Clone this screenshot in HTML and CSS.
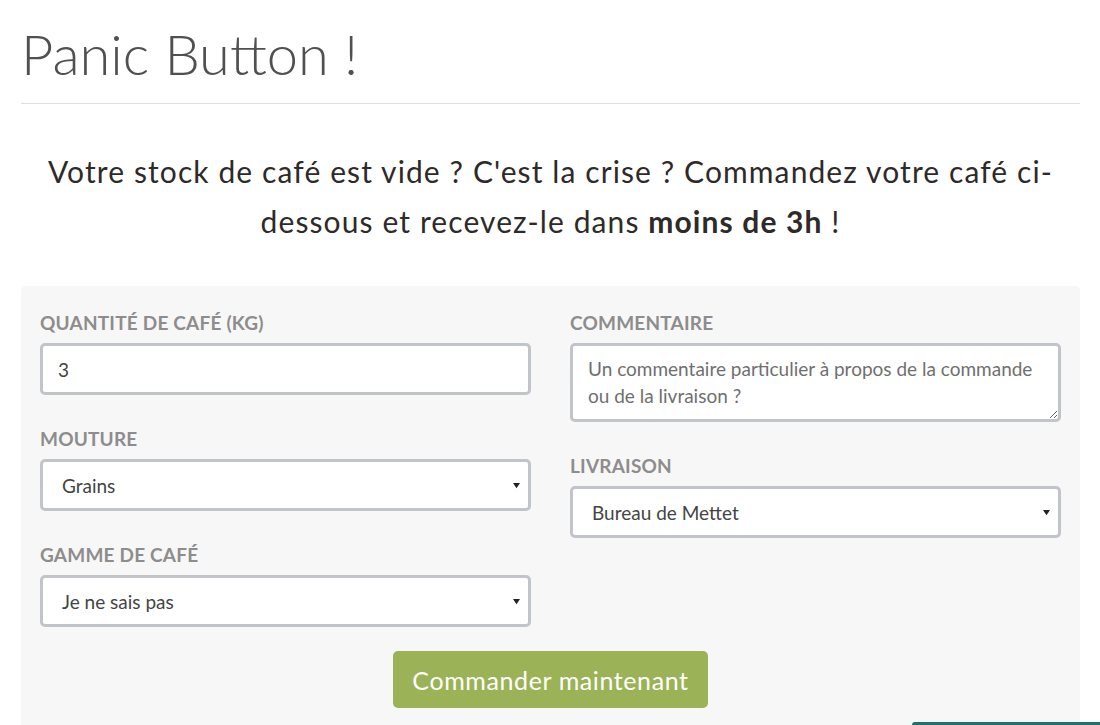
FILE: index.html
```html
<!DOCTYPE html>
<html lang="fr">
<head>
<meta charset="utf-8">
<title>Panic Button !</title>
<link rel="stylesheet" href="styles.css">
</head>
<body>
<div class="page">
  <h1 class="title">Panic Button !</h1>
  <hr class="rule">
  <p class="lead">Votre stock de café est vide ? C'est la crise ? Commandez votre café ci-<br>dessous et recevez-le dans <strong>moins de 3h</strong> !</p>
  <form class="panel">
    <div class="cols">
      <div class="col">
        <div class="field">
          <label class="label">Quantité de café (kg)</label>
          <input class="control" type="text" value="3">
        </div>
        <div class="field">
          <label class="label">Mouture</label>
          <select class="control select"><option>Grains</option></select>
        </div>
        <div class="field">
          <label class="label">Gamme de café</label>
          <select class="control select"><option>Je ne sais pas</option></select>
        </div>
      </div>
      <div class="col">
        <div class="field">
          <label class="label">Commentaire</label>
          <textarea class="control area" placeholder="Un commentaire particulier à propos de la commande ou de la livraison ?"></textarea>
        </div>
        <div class="field">
          <label class="label">Livraison</label>
          <select class="control select"><option>Bureau de Mettet</option></select>
        </div>
      </div>
    </div>
    <div class="actions">
      <button class="btn" type="button">Commander maintenant</button>
    </div>
  </form>
</div>
<div class="chat-tab"></div>
</body>
</html>
```

FILE: styles.css
```css
html, body {
  margin: 0;
  padding: 0;
  background: #ffffff;
}
body {
  font-family: Lato, "Open Sans", "Liberation Sans", sans-serif;
  color: #333333;
  overflow: hidden;
}
.page {
  padding: 0 20px 0 21px;
}
.title {
  margin: 0;
  padding-top: 22px;
  font-weight: 300;
  font-size: 56px;
  line-height: 64px;
  color: #505050;
  letter-spacing: 0;
}
.rule {
  margin: 17px 0 0 0;
  border: 0;
  border-top: 1px solid #dedede;
  height: 0;
}
.lead {
  margin: 42px 0 0 0;
  text-align: center;
  font-size: 30px;
  line-height: 50px;
  color: #2f2a2a;
  letter-spacing: 1.1px;
}
.lead strong {
  font-weight: 700;
}
.panel {
  margin-top: 40px;
  background: #f7f7f7;
  border-radius: 5px;
  padding: 27px 19px 40px 19px;
}
.cols {
  display: grid;
  grid-template-columns: 1fr 1fr;
  column-gap: 39px;
}
.field {
  margin-bottom: 34px;
}
.label {
  display: block;
  font-weight: 700;
  font-size: 19px;
  line-height: 20px;
  text-transform: uppercase;
  color: #8e8c8c;
  margin-bottom: 10px;
  letter-spacing: 0.2px;
}
.control {
  display: block;
  box-sizing: border-box;
  width: 100%;
  height: 52px;
  border: 3px solid #c1c5c9;
  border-radius: 5px;
  background-color: #ffffff;
  font-family: Lato, "Open Sans", sans-serif;
  font-size: 19px;
  color: #444444;
  padding: 0 20px 0 15px;
  outline: none;
}
.select {
  -webkit-appearance: none;
  appearance: none;
  padding-left: 19px;
  background-image: url("data:image/svg+xml;utf8,<svg xmlns='http://www.w3.org/2000/svg' width='8' height='8'><path d='M0 1h8L4 7z' fill='%23222'/></svg>");
  background-repeat: no-repeat;
  background-position: right 8px center;
  background-size: 7px 7px;
}
.area {
  height: 79px;
  padding: 9px 15px;
  line-height: 27px;
  resize: vertical;
}
.area::placeholder {
  color: #6f6f6f;
  opacity: 1;
}
.actions {
  display: flex;
  justify-content: center;
  margin-top: -10px;
}
.btn {
  background: #9bb356;
  color: #ffffff;
  border: 0;
  border-radius: 5px;
  font-family: Lato, "Open Sans", sans-serif;
  font-size: 25px;
  letter-spacing: 0.6px;
  width: 315px;
  height: 57px;
  cursor: pointer;
}
.chat-tab {
  position: fixed;
  left: 912px;
  right: 0;
  top: 722px;
  height: 10px;
  background: #246d70;
  border-radius: 3px 0 0 0;
}
```
